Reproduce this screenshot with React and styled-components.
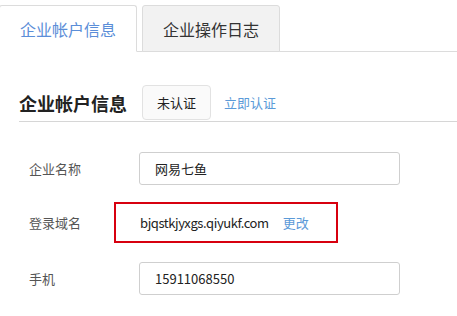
import styled, { createGlobalStyle } from 'styled-components';

const GlobalStyle = createGlobalStyle`
  html, body {
    margin: 0;
    padding: 0;
    background: #fff;
    font-family: "Noto Sans CJK SC", "Noto Sans", sans-serif;
  }
`;

const Page = styled.div`
  width: 457px;
  height: 316px;
  overflow: hidden;
`;

// 탭
const TabBar = styled.div`
  display: flex;
  align-items: flex-end;
  gap: 5px;
  height: 52px;
  border-bottom: 1px solid #dcdcdc;
  box-sizing: border-box;
`;

const Tab = styled.div`
  width: 138px;
  height: 47px;
  box-sizing: border-box;
  margin-bottom: -1px;
  display: flex;
  align-items: center;
  justify-content: center;
  font-size: 16px;
  border: 1px solid #dcdcdc;
  border-radius: 3px 3px 0 0;
  color: ${(props) => (props.active ? '#5b8ed8' : '#333')};
  background: ${(props) => (props.active ? '#fff' : '#f2f2f2')};
  border-bottom-color: ${(props) => (props.active ? '#fff' : '#dcdcdc')};
  &:first-child {
    margin-left: -1px;
  }
`;

// 제목
const Section = styled.div`
  padding-left: 19px;
`;

const HeadRow = styled.div`
  display: flex;
  align-items: center;
  gap: 15px;
  margin-top: 33px;
  height: 35px;
  border-bottom: 1px solid #d6d6d6;
  padding-bottom: 1px;
`;

const Title = styled.h2`
  margin: 0;
  font-size: 18px;
  font-weight: bold;
  color: #222;
`;

const Badge = styled.span`
  width: 69px;
  height: 35px;
  box-sizing: border-box;
  display: flex;
  align-items: center;
  justify-content: center;
  font-size: 13px;
  color: #222;
  background: #fafafa;
  border: 1px solid #e2e2e2;
  border-radius: 4px;
`;

const Link = styled.a`
  font-size: 13px;
  color: #5b9ad8;
  text-decoration: none;
  cursor: pointer;
  margin-left: ${(props) => props.shift || 0}px;
`;

// 폼
const Form = styled.div`
  display: flex;
  flex-direction: column;
  padding-left: 10px;
  margin-top: 30px;
`;

const Row = styled.div`
  display: flex;
  align-items: center;
  margin-bottom: ${(props) => props.gap || 0}px;
`;

const Label = styled.span`
  width: 110px;
  font-size: 13px;
  color: #555;
`;

const Input = styled.div`
  width: 261px;
  height: 33px;
  box-sizing: border-box;
  border: 1px solid #cfcfcf;
  border-radius: 3px;
  padding-left: 15px;
  display: flex;
  align-items: center;
  font-size: 13px;
  color: #222;
`;

const Highlight = styled.div`
  width: 224px;
  height: 41px;
  box-sizing: border-box;
  margin-left: -25px;
  border: 2px solid #d7000f;
  padding-left: 24px;
  display: flex;
  align-items: center;
  gap: 14px;
  font-size: 13px;
  color: #222;
`;

const Domain = styled.span`
  letter-spacing: -0.4px;
`;

export default function App() {
  return (
    <Page>
      <GlobalStyle />
      <TabBar>
        <Tab active>企业帐户信息</Tab>
        <Tab>企业操作日志</Tab>
      </TabBar>

      <Section>
        <HeadRow>
          <Title>企业帐户信息</Title>
          <Badge>未认证</Badge>
          <Link shift={-2}>立即认证</Link>
        </HeadRow>

        <Form>
          <Row gap={17}>
            <Label>企业名称</Label>
            <Input>网易七鱼</Input>
          </Row>
          <Row gap={19}>
            <Label>登录域名</Label>
            <Highlight>
              <Domain>bjqstkjyxgs.qiyukf.com</Domain>
              <Link>更改</Link>
            </Highlight>
          </Row>
          <Row>
            <Label>手机</Label>
            <Input>15911068550</Input>
          </Row>
        </Form>
      </Section>
    </Page>
  );
}
